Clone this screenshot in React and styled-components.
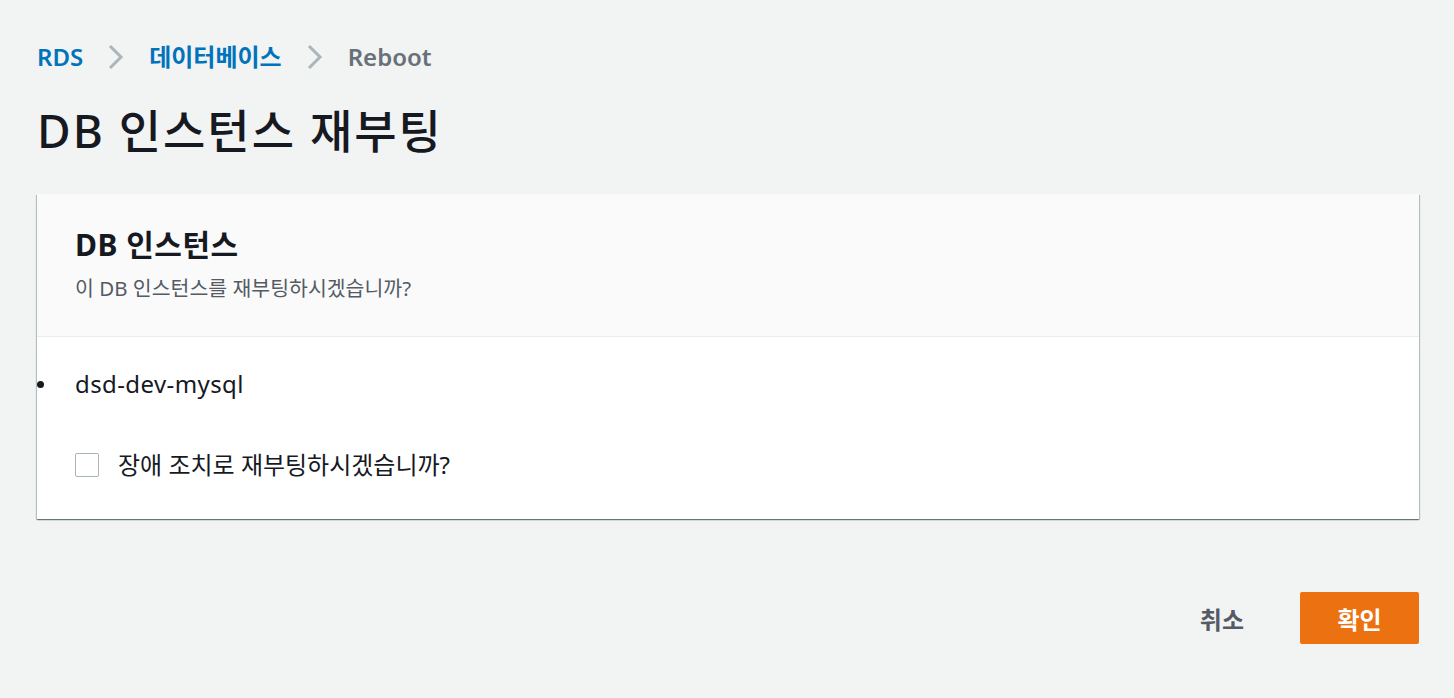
import React, { useState } from 'react';
import styled, { createGlobalStyle } from 'styled-components';

const GlobalStyle = createGlobalStyle`
  body {
    margin: 0;
    background-color: #f2f3f3;
    font-family: 'Noto Sans', 'Noto Sans CJK KR', sans-serif;
    color: #16191f;
  }
`;

const Page = styled.div`
  padding: 41px 35px 40px 37px;
`;

const Breadcrumbs = styled.nav`
  display: flex;
  align-items: center;
  gap: 24px;
  height: 32px;
  font-size: 24px;
  font-weight: 600;
  line-height: 32px;
`;

const Crumb = styled.span`
  color: ${(p) => (p.current ? '#687078' : '#0073bb')};
  cursor: ${(p) => (p.current ? 'default' : 'pointer')};
`;

const Chevron = styled.svg`
  width: 18px;
  height: 28px;
  display: block;
`;

const Title = styled.h1`
  margin: 31px 0 38px;
  font-size: 46px;
  font-weight: 500;
  letter-spacing: 2px;
  line-height: 52px;
  color: #16191f;
`;

const Card = styled.section`
  background-color: #ffffff;
  box-shadow: 0 1px 1px 0 rgba(0, 28, 36, 0.35), 1px 1px 1px 0 rgba(0, 28, 36, 0.2),
    -1px 1px 1px 0 rgba(0, 28, 36, 0.2);
`;

const CardHeader = styled.div`
  background-color: #fafafa;
  border-bottom: 1px solid #eaeded;
  padding: 33px 38px 35px;
`;

const CardTitle = styled.h2`
  margin: 0;
  font-size: 30px;
  font-weight: 700;
  letter-spacing: 0.5px;
  line-height: 36px;
`;

const CardDesc = styled.p`
  margin: 12px 0 0;
  font-size: 20.5px;
  font-weight: 400;
  line-height: 26px;
  color: #545b64;
`;

const CardBody = styled.div`
  padding: 33px 38px 40px;
`;

const List = styled.ul`
  list-style: none;
  margin: 0 0 0 -38px;
  padding: 0;
`;

const Item = styled.li`
  display: grid;
  grid-template-columns: 38px 1fr;
  align-items: center;
  font-size: 24px;
  letter-spacing: 0.4px;
  line-height: 28px;
`;

const Dot = styled.span`
  width: 7px;
  height: 7px;
  border-radius: 50%;
  background-color: #16191f;
`;

const CheckRow = styled.label`
  display: flex;
  align-items: center;
  gap: 19px;
  margin-top: 53px;
  font-size: 24px;
  line-height: 28px;
  cursor: pointer;
`;

const Box = styled.span`
  width: 22px;
  height: 22px;
  border: 1px solid #aab7b8;
  border-radius: 2px;
  background-color: ${(p) => (p.checked ? '#0073bb' : '#ffffff')};
  display: flex;
  align-items: center;
  justify-content: center;
`;

const Footer = styled.div`
  display: flex;
  justify-content: flex-end;
  align-items: center;
  gap: 56px;
  margin-top: 73px;
`;

const TextButton = styled.button`
  border: none;
  background: transparent;
  padding: 0;
  font-family: inherit;
  font-size: 24px;
  font-weight: 700;
  color: #545b64;
  cursor: pointer;
`;

const PrimaryButton = styled.button`
  width: 119px;
  height: 52px;
  border: none;
  border-radius: 2px;
  background-color: #ec7211;
  color: #ffffff;
  font-family: inherit;
  font-size: 24px;
  font-weight: 700;
  cursor: pointer;
`;

const ChevronIcon = () => (
  <Chevron viewBox="0 0 18 28">
    <path d="M3 3 L14 14 L3 25" fill="none" stroke="#aab7b8" strokeWidth="3" />
  </Chevron>
);

const App = () => {
  const [checked, setChecked] = useState(false);

  return (
    <>
      <GlobalStyle />
      <Page>
        <Breadcrumbs>
          <Crumb>RDS</Crumb>
          <ChevronIcon />
          <Crumb>데이터베이스</Crumb>
          <ChevronIcon />
          <Crumb current>Reboot</Crumb>
        </Breadcrumbs>
        <Title>DB 인스턴스 재부팅</Title>
        <Card>
          <CardHeader>
            <CardTitle>DB 인스턴스</CardTitle>
            <CardDesc>이 DB 인스턴스를 재부팅하시겠습니까?</CardDesc>
          </CardHeader>
          <CardBody>
            <List>
              <Item>
                <Dot />
                <span>dsd-dev-mysql</span>
              </Item>
            </List>
            <CheckRow onClick={() => setChecked(!checked)}>
              <Box checked={checked}>
                {checked && (
                  <svg width="16" height="16" viewBox="0 0 16 16">
                    <path d="M3 8 L7 12 L13 4" fill="none" stroke="#fff" strokeWidth="2" />
                  </svg>
                )}
              </Box>
              <span>장애 조치로 재부팅하시겠습니까?</span>
            </CheckRow>
          </CardBody>
        </Card>
        <Footer>
          <TextButton>취소</TextButton>
          <PrimaryButton>확인</PrimaryButton>
        </Footer>
      </Page>
    </>
  );
};

export default App;
